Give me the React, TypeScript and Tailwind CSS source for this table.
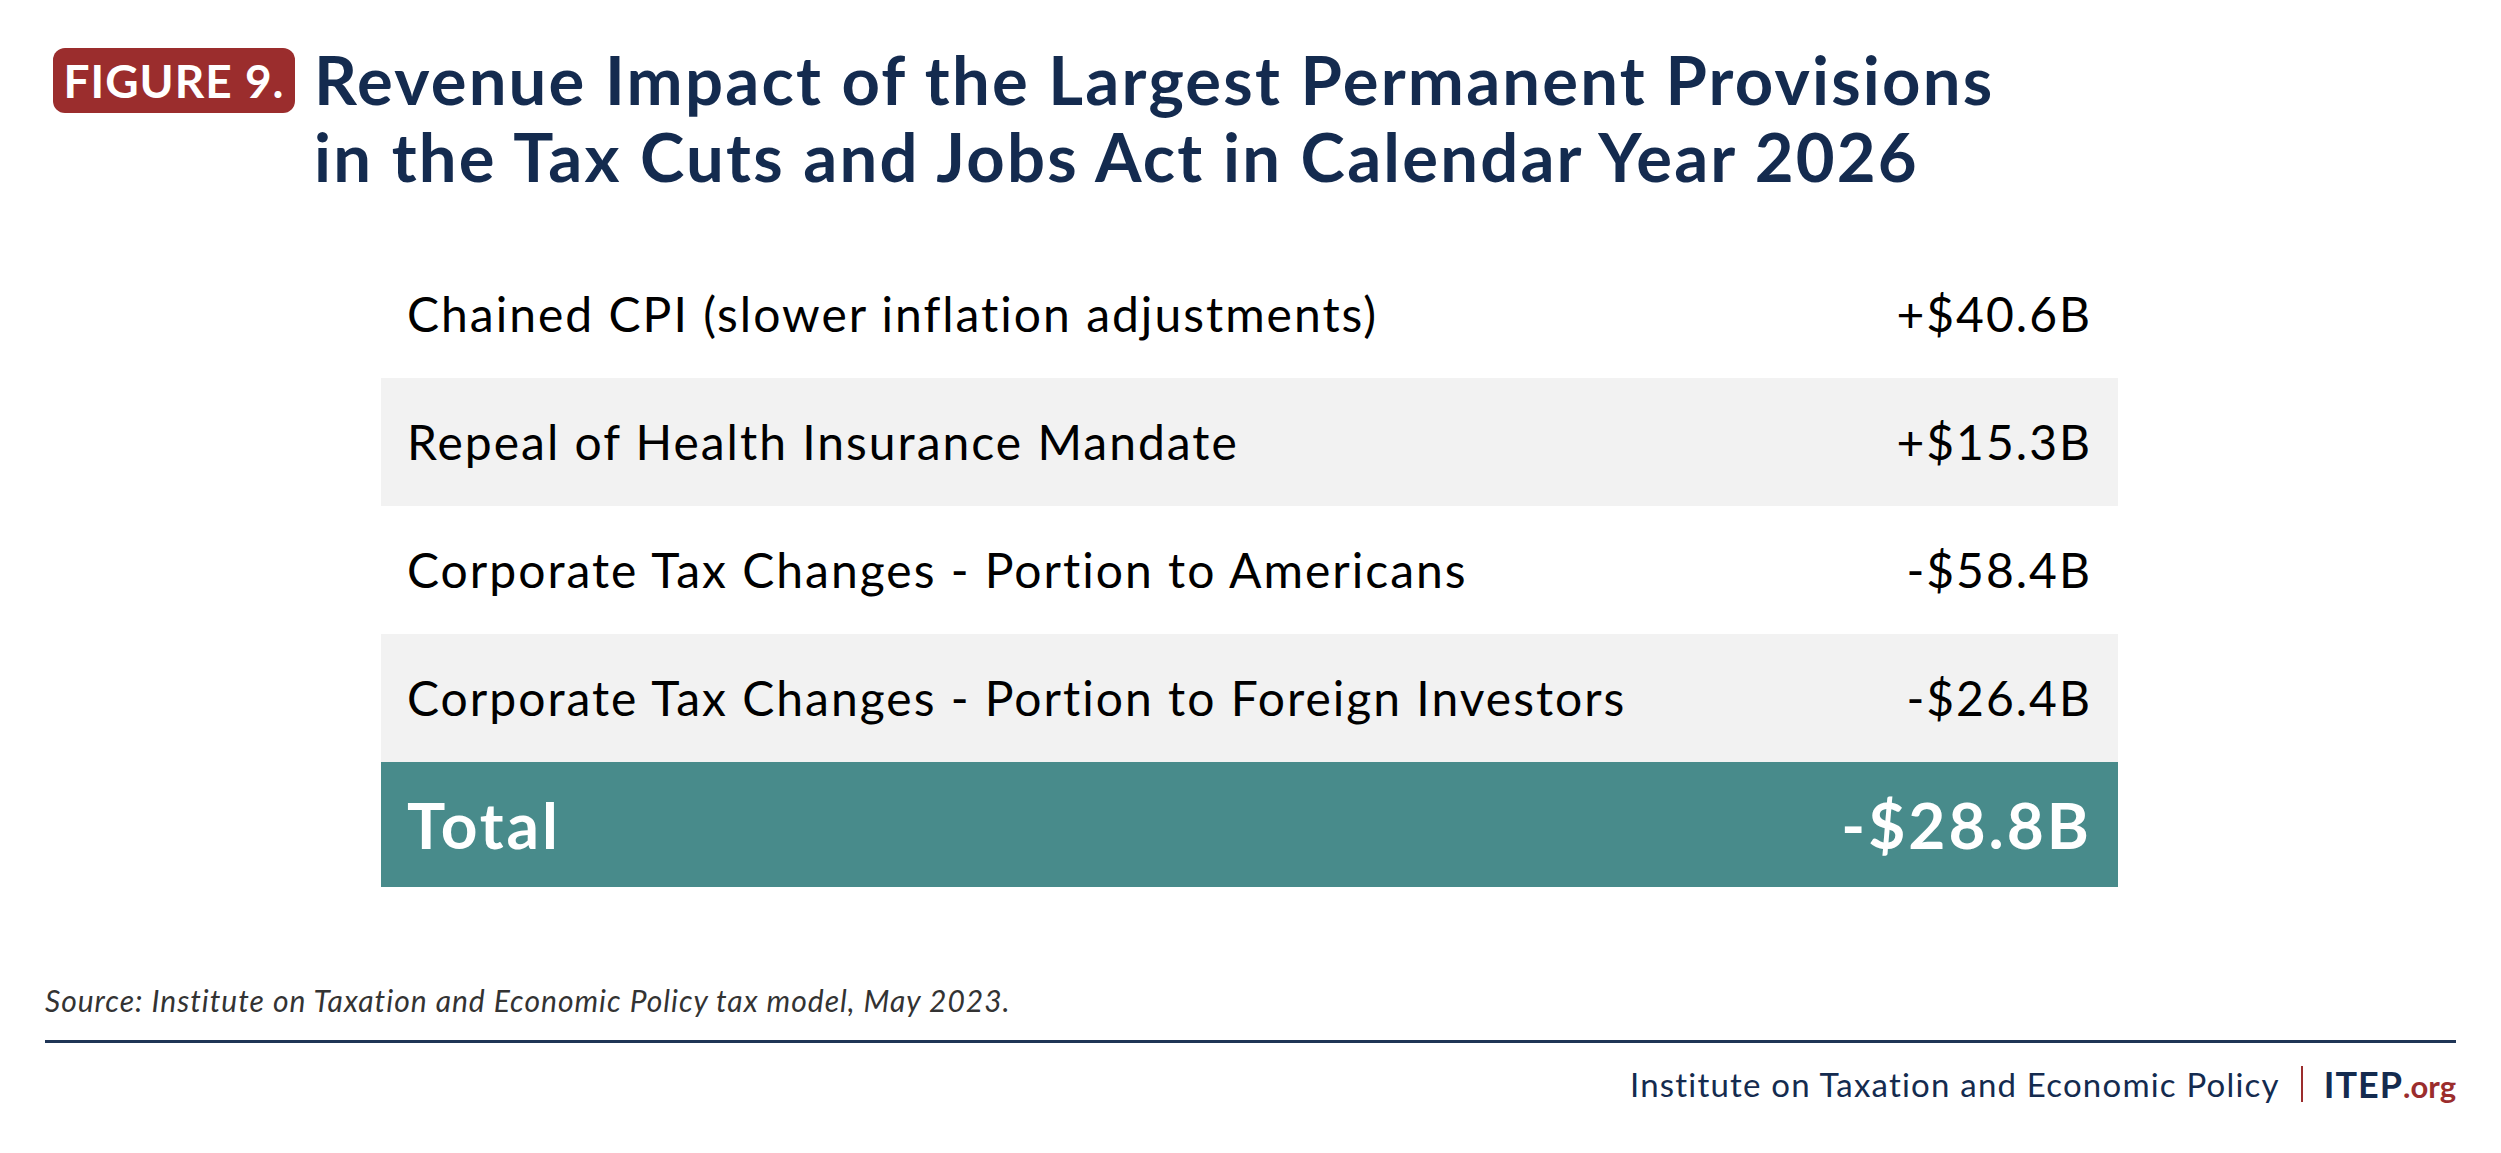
const rows = [
  { label: "Chained CPI (slower inflation adjustments)", value: "+$40.6B", shaded: false },
  { label: "Repeal of Health Insurance Mandate", value: "+$15.3B", shaded: true },
  { label: "Corporate Tax Changes - Portion to Americans", value: "-$58.4B", shaded: false },
  { label: "Corporate Tax Changes - Portion to Foreign Investors", value: "-$26.4B", shaded: true },
]

export default function App() {
  return (
    <div className="w-[2501px] h-[1153px] bg-white font-['Lato','Liberation_Sans',sans-serif] text-black">
      {/* header */}
      <div className="h-[250px] flex items-start pl-[53px] pt-[48px]">
        <div className="w-[242px] h-[65px] rounded-[12px] bg-[#9b2d2d] flex items-center justify-center text-white font-bold text-[46px] leading-none tracking-[1px]">
          FIGURE 9.
        </div>
        <h1 className="ml-[19px] -mt-[7px] text-[#142b4f] font-bold text-[67px] leading-[77px] tracking-[2.2px]">
          Revenue Impact of the Largest Permanent Provisions
          <br />
          in the Tax Cuts and Jobs Act in Calendar Year 2026
        </h1>
      </div>

      {/* table */}
      <div className="ml-[381px] w-[1737px]">
        {rows.map((r) => (
          <div
            key={r.label}
            className={`h-[128px] flex items-center justify-between px-[26px] text-[48px] tracking-[2px] ${r.shaded ? "bg-[#f2f2f2]" : "bg-white"}`}
          >
            <span>{r.label}</span>
            <span>{r.value}</span>
          </div>
        ))}
        <div className="h-[125px] flex items-center justify-between px-[26px] bg-[#488b8b] text-white font-bold text-[64px] tracking-[3px]">
          <span>Total</span>
          <span>-$28.8B</span>
        </div>
      </div>

      {/* source */}
      <p className="mt-[95px] pl-[45px] italic text-[30px] leading-[36px] tracking-[1px] text-[#333333]">
        Source: Institute on Taxation and Economic Policy tax model, May 2023.
      </p>
      <div className="mx-[45px] mt-[22px] h-[3px] bg-[#1f3556]" />

      {/* footer */}
      <div className="mt-[23px] pr-[45px] flex items-center justify-end text-[33px] leading-none tracking-[1.2px] text-[#142b4f]">
        <span>Institute on Taxation and Economic Policy</span>
        <span className="mx-[21px] w-[2px] h-[36px] bg-[#9b2d2d]" />
        <span className="font-bold text-[36px] tracking-[1px]">ITEP</span>
        <span className="font-bold text-[#9b2d2d] text-[31px] tracking-[0px] self-end">.org</span>
      </div>
    </div>
  )
}
